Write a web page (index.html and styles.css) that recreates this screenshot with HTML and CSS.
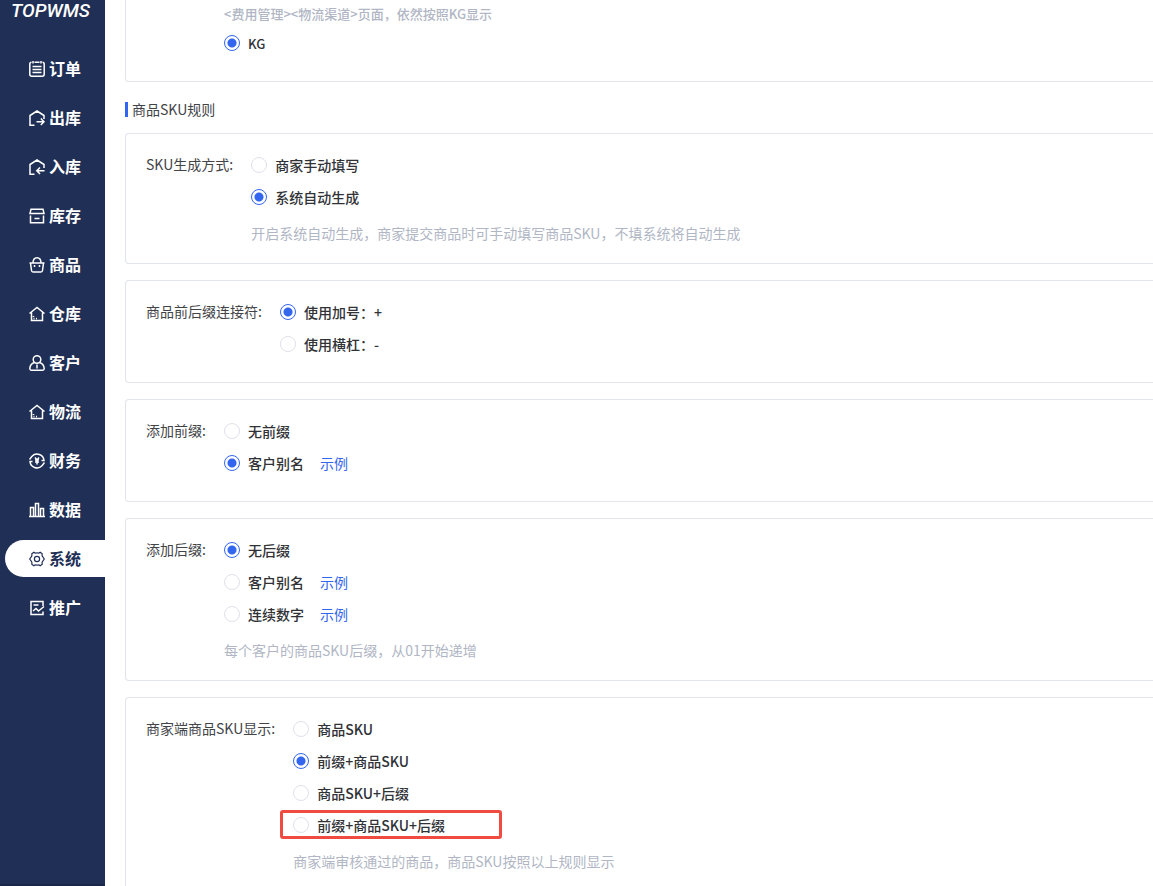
FILE: index.html
```html
<!DOCTYPE html>
<html lang="zh-CN">
<head>
    <meta charset="UTF-8">
    <meta name="viewport" content="width=device-width, initial-scale=1.0">
    <title>TOPWMS</title>
    <link rel="stylesheet" href="styles.css">
</head>
<body>
    <aside class="sidebar">
        <div class="logo">TOPWMS</div>
        <nav class="menu">
            <a href="#" class="menu-item">
                <svg class="icon" viewBox="0 0 16 16"><path d="M2.500 1.200Q0.800 1.200 0.800 3V13.200Q0.800 15.200 2.800 15.200H13.200Q15.200 15.200 15.200 13.200V3Q15.200 1.200 13.500 1.200M5.500 1.200H10.500M4 0V2.500M12 0V2.500M3.500 5.500H12.500M3.500 8.500H12.500M3.500 11.500H12.500"/></svg>
                <span>订单</span>
            </a>
            <a href="#" class="menu-item">
                <svg class="icon" viewBox="0 0 16 16"><path d="M5.500 15.200H1V5.500L8 1L15 5.500V9M7.500 11.800H15M11.800 8.500L15 11.800L11.800 15"/></svg>
                <span>出库</span>
            </a>
            <a href="#" class="menu-item">
                <svg class="icon" viewBox="0 0 16 16"><path d="M5.500 15.200H1V5.500L8 1L15 5.500V9M15.500 11.800H8M11 8.500L7.800 11.800L11 15"/></svg>
                <span>入库</span>
            </a>
            <a href="#" class="menu-item">
                <svg class="icon" viewBox="0 0 16 16"><path d="M2 1.200H14L15 5.500H1ZM1.500 7.500V14.800H14.500V7.500M5.500 10.500H10.500"/></svg>
                <span>库存</span>
            </a>
            <a href="#" class="menu-item">
                <svg class="icon" viewBox="0 0 16 16"><path d="M0.500 6H15.500M1.500 6L2.500 13.500Q2.700 15 4 15H12Q13.300 15 13.500 13.500L14.500 6M4 6C4 -1 12 -1 12 6M5.500 8V10M10.500 8V10"/></svg>
                <span>商品</span>
            </a>
            <a href="#" class="menu-item">
                <svg class="icon" viewBox="0 0 16 16"><path d="M0.500 7.500L8 1.500L15.500 7.500M2.500 6.500V14.500H13.500V6.500M4.500 10V11M4.500 12.500H5.500M7 12.500H8"/></svg>
                <span>仓库</span>
            </a>
            <a href="#" class="menu-item">
                <svg class="icon" viewBox="0 0 16 16"><circle cx="8" cy="4.500" r="3.800"/><path d="M5.500 7.500Q1 9 0.800 13.500Q0.800 15.200 2.300 15.200H13.700Q15.200 15.200 15.200 13.500Q15 9 10.500 7.500M8 9.500V13.500"/></svg>
                <span>客户</span>
            </a>
            <a href="#" class="menu-item">
                <svg class="icon" viewBox="0 0 16 16"><path d="M0.500 7.500L8 1.500L15.500 7.500M2.500 6.500V14.500H13.500V6.500M4.500 10V11M4.500 12.500H5.500M7 12.500H8"/></svg>
                <span>物流</span>
            </a>
            <a href="#" class="menu-item">
                <svg class="icon" viewBox="0 0 16 16"><path d="M3 3.200A7 7 0 0 1 15 7.500H12.500M13 12.800A7 7 0 0 1 1 8.500H3.500M0.500 6.500L3 3.200M15.500 9.500L13 12.800M6 4.500L8 7L10 4.500M8 7V11.500M6 7H10M6 9H10"/></svg>
                <span>财务</span>
            </a>
            <a href="#" class="menu-item">
                <svg class="icon" viewBox="0 0 16 16"><path d="M0 14.500H16M1.500 14V5.500H4.500V14M6.500 14V1.500H9.500V14M11.500 14V6.500H14.500V14"/></svg>
                <span>数据</span>
            </a>
            <a href="#" class="menu-item active">
                <svg class="icon" viewBox="0 0 16 16"><path d="M4.800 1.300Q6.300 2.600 8 1.800Q9.700 2.600 11.200 1.300L13.200 2.700Q12.800 5 13.800 5.800L15.300 8L13.800 10.200Q12.800 11 13.200 13.300L11.200 14.700Q9.700 13.400 8 14.200Q6.300 13.400 4.800 14.700L2.800 13.300Q3.200 11 2.200 10.200L0.700 8L2.200 5.800Q3.200 5 2.800 2.700Z"/><circle cx="8" cy="8" r="2.600"/></svg>
                <span>系统</span>
            </a>
            <a href="#" class="menu-item">
                <svg class="icon" viewBox="0 0 16 16"><path d="M14 6V1.500H2V14.500H14V11.500M4.500 5H9.500M4 11L7 8.500L9.500 11L15 6.500"/></svg>
                <span>推广</span>
            </a>
        </nav>
    </aside>

    <main class="content">
        <section class="card card-unit">
            <p class="hint">&lt;费用管理&gt;&lt;物流渠道&gt;页面，依然按照KG显示</p>
            <label class="option"><input type="radio" name="unit" checked>KG</label>
        </section>

        <h2 class="section-title">商品SKU规则</h2>

        <section class="card" role="radiogroup" aria-labelledby="l-mode">
            <div class="label" id="l-mode">SKU生成方式:</div>
            <div class="options">
                <label class="option"><input type="radio" name="mode">商家手动填写</label>
                <label class="option"><input type="radio" name="mode" checked>系统自动生成</label>
                <p class="hint">开启系统自动生成，商家提交商品时可手动填写商品SKU，不填系统将自动生成</p>
            </div>
        </section>

        <section class="card" role="radiogroup" aria-labelledby="l-joiner">
            <div class="label" id="l-joiner">商品前后缀连接符:</div>
            <div class="options">
                <label class="option"><input type="radio" name="joiner" checked>使用加号：+</label>
                <label class="option"><input type="radio" name="joiner">使用横杠：-</label>
            </div>
        </section>

        <section class="card" role="radiogroup" aria-labelledby="l-prefix">
            <div class="label" id="l-prefix">添加前缀:</div>
            <div class="options">
                <label class="option"><input type="radio" name="prefix">无前缀</label>
                <div class="option-row">
                    <label class="option"><input type="radio" name="prefix" checked>客户别名</label>
                    <a href="#" class="example">示例</a>
                </div>
            </div>
        </section>

        <section class="card" role="radiogroup" aria-labelledby="l-suffix">
            <div class="label" id="l-suffix">添加后缀:</div>
            <div class="options">
                <label class="option"><input type="radio" name="suffix" checked>无后缀</label>
                <div class="option-row">
                    <label class="option"><input type="radio" name="suffix">客户别名</label>
                    <a href="#" class="example">示例</a>
                </div>
                <div class="option-row">
                    <label class="option"><input type="radio" name="suffix">连续数字</label>
                    <a href="#" class="example">示例</a>
                </div>
                <p class="hint">每个客户的商品SKU后缀，从01开始递增</p>
            </div>
        </section>

        <section class="card" role="radiogroup" aria-labelledby="l-show">
            <div class="label" id="l-show">商家端商品SKU显示:</div>
            <div class="options">
                <label class="option"><input type="radio" name="show">商品SKU</label>
                <label class="option"><input type="radio" name="show" checked>前缀+商品SKU</label>
                <label class="option"><input type="radio" name="show">商品SKU+后缀</label>
                <label class="option marked"><input type="radio" name="show">前缀+商品SKU+后缀</label>
                <p class="hint">商家端审核通过的商品，商品SKU按照以上规则显示</p>
            </div>
        </section>
    </main>
</body>
</html>
```
FILE: styles.css
```css
*,
*::after {
    box-sizing: border-box;
}

body {
    margin: 0;
    height: 100vh;
    display: flex;
    overflow: hidden;
    background-color: #fff;
    color: #303236;
    font-family: "Noto Sans CJK SC", sans-serif;
    font-size: 14px;
}

a {
    text-decoration: none;
}

/* sidebar */
.sidebar {
    flex: 0 0 105px;
    background-color: #202f55;
    border-bottom: 2px solid #1b2748;
}

.logo {
    height: 50px;
    padding-left: 11px;
    color: #fff;
    font-family: Roboto, sans-serif;
    font-size: 19px;
    font-style: italic;
    font-weight: 500;
    line-height: 22px;
}

.menu {
    display: flex;
    flex-direction: column;
    gap: 12px;
}

.menu-item {
    display: flex;
    align-items: center;
    gap: 4px;
    height: 37px;
    margin-left: 5px;
    padding-left: 24px;
    border-radius: 19px 0 0 19px;
    color: #fff;
    font-size: 16px;
    font-weight: 700;
}

.menu-item span {
    padding-bottom: 2px;
}

.menu-item.active {
    background-color: #fff;
    color: #202f55;
}

.icon {
    width: 16px;
    height: 16px;
    fill: none;
    stroke: currentColor;
    stroke-width: 1.5;
}

.active .icon {
    stroke-width: 1.2;
}

/* settings */
.content {
    flex: 1;
    min-width: 0;
    padding-left: 20px;
}

.card {
    display: flex;
    gap: 18px;
    margin-bottom: 16px;
    padding: 15px 20px 22px;
    border: 1px solid #e2e4ed;
    border-right: none;
    border-radius: 4px 0 0 4px;
}

.card-unit {
    display: block;
    margin-bottom: 20px;
    padding: 7px 20px 22px 98px;
    border-top: none;
    border-radius: 0 0 0 4px;
}

.card-unit .hint {
    margin: 0 0 6px;
    font-weight: 500;
}

.card-unit .hint,
.card-unit .option {
    font-size: 13px;
}

.section-title {
    margin: 0 0 16px;
    padding-left: 4px;
    border-left: 3px solid #3366f0;
    color: #424448;
    font-size: 14px;
    font-weight: 400;
    line-height: 15px;
}

.label {
    color: #424448;
    line-height: 30px;
    white-space: nowrap;
}

.option {
    display: flex;
    align-items: center;
    gap: 8px;
    height: 32px;
    font-weight: 500;
}

.option-row {
    display: flex;
    align-items: center;
    gap: 16px;
}

.option input {
    appearance: none;
    width: 16px;
    height: 16px;
    margin: 0;
    border: 1px solid #dfe1ea;
    border-radius: 50%;
    background-color: #fff;
}

.option input:checked {
    border-color: #3366f0;
    background-image: radial-gradient(circle, #3366f0 4px, transparent 5px);
}

.marked {
    position: relative;
}

.marked::after {
    content: "";
    position: absolute;
    top: 1px;
    left: -13px;
    width: 222px;
    height: 29px;
    border: 3px solid #f04b40;
    border-radius: 3px;
    pointer-events: none;
}

.example {
    color: #3366f0;
}

.hint {
    margin: 13px 0 1px;
    color: #b0b6c4;
    line-height: 14px;
}
```
